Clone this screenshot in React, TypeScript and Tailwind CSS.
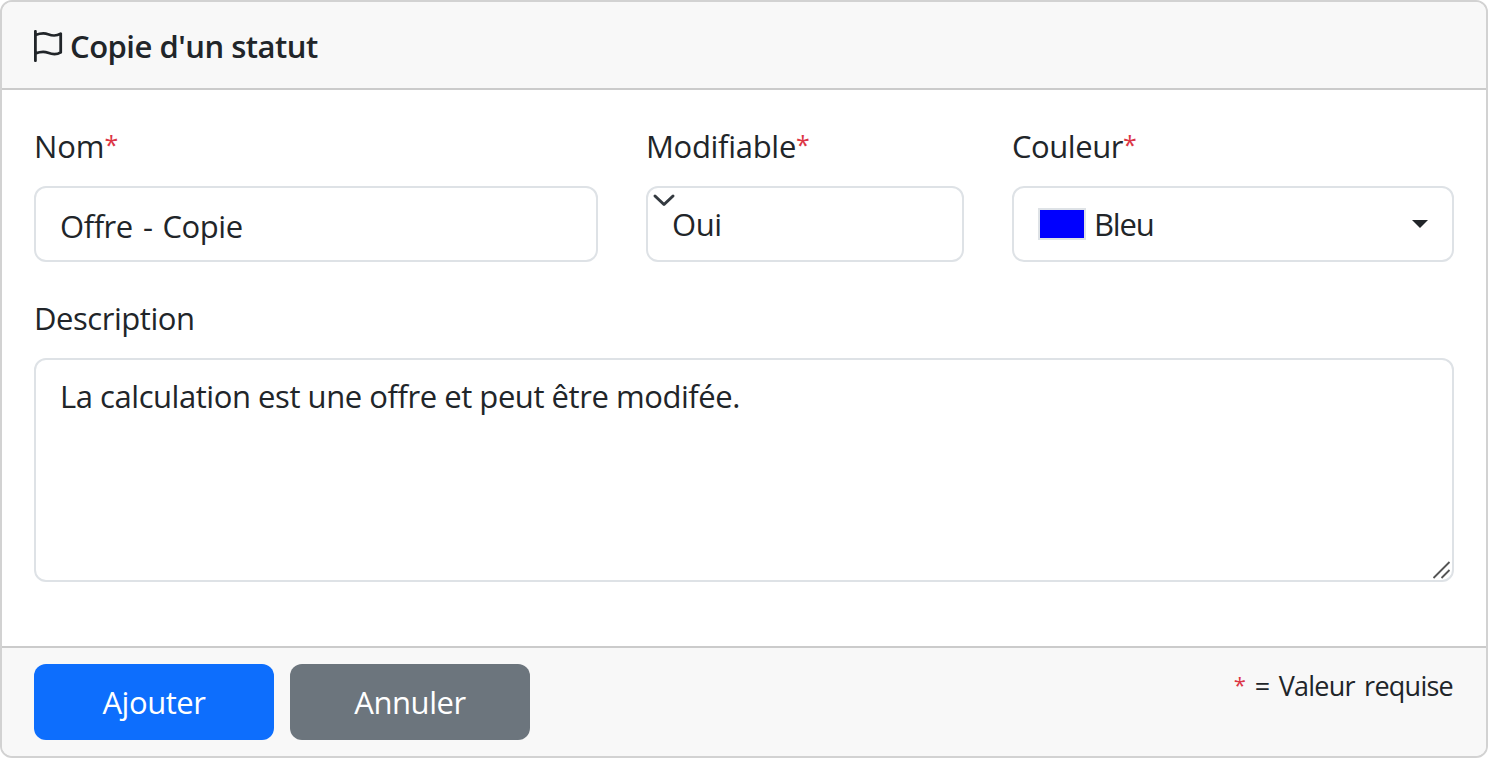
import React from "react";

function Star() {
  return <span className="relative top-[-2px] text-[25px] text-[#dc3545]">*</span>;
}

const label = "mb-4 flex h-[48px] items-center whitespace-nowrap text-[31px] leading-[48px]";
const box = "rounded-[12px] border-2 border-[#dee2e6] bg-white";

export default function App() {
  return (
    <div className="flex h-[758px] w-[1488px] flex-col overflow-hidden rounded-[12px] border-2 border-[#d2d2d2] bg-white font-['Open_Sans','Noto_Sans',sans-serif] text-[31px] font-normal tracking-[-0.45px] text-[#212529]">
      <header className="flex h-[88px] shrink-0 items-center border-b-2 border-[#cbcbcb] bg-[#f8f8f8] pl-[30px] pt-[2px]">
        <svg className="mr-[6px] h-[32px] w-[32px]" viewBox="0 0 32 32" fill="none" stroke="#212529" strokeWidth="2.8" strokeLinecap="round" strokeLinejoin="round">
          <path d="M3.400 1.300V30.700M3.400 5C8 3.400 12 2.800 16 4.200S23.500 6.600 28.700 3.600V22.400C24 25.400 20.500 24.600 16 22.800S8 21.800 3.400 23.400" />
        </svg>
        <h1 className="whitespace-nowrap text-[31px] font-semibold tracking-[-0.5px]">Copie d'un statut</h1>
      </header>
      <main className="flex grow flex-col px-[32px] pt-[32px]">
        <div className="flex gap-[48px]">
          <div className="w-[564px]">
            <label className={label}><span className="tracking-[-0.1px]">Nom</span><Star /></label>
            <div className={`${box} flex h-[76px] items-center pl-[24px] pt-[4px]`}><span className="[word-spacing:2.5px]">Offre - Copie</span></div>
          </div>
          <div className="w-[318px]">
            <label className={label}><span className="tracking-[-0.3px]">Modifiable</span><Star /></label>
            <div className={`${box} relative flex h-[76px] items-center pl-[24px]`}>
              <svg className="absolute left-[4px] top-[4px] h-[16px] w-[24px]" viewBox="0 0 24 16" fill="none" stroke="#343a40" strokeWidth="3" strokeLinecap="round" strokeLinejoin="round"><path d="M3 4L12 12.500L21 4" /></svg>
              <span>Oui</span>
            </div>
          </div>
          <div className="w-[442px]">
            <label className={label}><span>Couleur</span><Star /></label>
            <div className={`${box} flex h-[76px] items-center px-[24px]`}>
              <span className="mr-[8px] h-[32px] w-[48px] border-2 border-[#dee2e6] bg-[#0000ff]" />
              <span className="tracking-[-1.2px]">Bleu</span>
              <svg className="ml-auto h-[8px] w-[16px]" viewBox="0 0 16 8"><path d="M0 0H16L8 8Z" fill="#212529" /></svg>
            </div>
          </div>
        </div>
        <div className="mt-[32px]">
          <label className={label}><span>Description</span></label>
          <div className={`${box} relative h-[224px] px-[24px] pt-[12px] leading-[48px]`}>
            <span>La calculation est une offre et peut être modifée.</span>
            <svg className="absolute bottom-0 right-0 h-[20px] w-[20px]" viewBox="0 0 20 20" stroke="#555" strokeWidth="1.8"><path d="M1.500 18L17.500 2M9.500 18L17.500 10" /></svg>
          </div>
        </div>
      </main>
      <footer className="flex h-[110px] shrink-0 gap-4 border-t-2 border-[#cbcbcb] bg-[#f8f8f8] px-[32px] pt-[16px]">
        <button className="h-[76px] w-[240px] rounded-[12px] bg-[#0d6efd] text-white">Ajouter</button>
        <button className="h-[76px] w-[240px] rounded-[12px] bg-[#6c757d] text-white">Annuler</button>
        <p className="ml-auto mr-[1px] flex h-[42px] items-center whitespace-pre pt-[2px] text-[27px] leading-[42px]"><span className="relative top-[-2px] text-[22px] text-[#dc3545]">*</span><span className="tracking-[-0.75px] [word-spacing:3px]"> = Valeur requise</span></p>
      </footer>
    </div>
  );
}
